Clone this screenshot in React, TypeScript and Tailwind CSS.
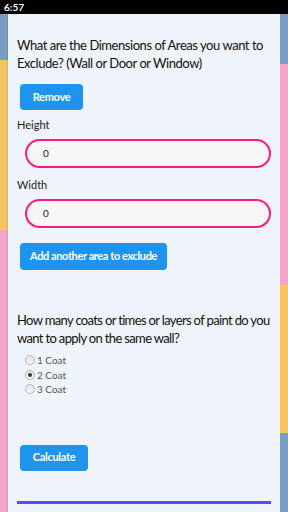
import React from "react";

const font = { fontFamily: "Lato, 'Open Sans', sans-serif" };

function Radio({ checked, label }: { checked?: boolean; label: string }) {
  return (
    <div className="flex items-center h-[14.5px] ml-[8px]">
      <span className="w-[10px] h-[10px] rounded-full border border-[#b5b5b5] bg-gradient-to-b from-[#e2e2e2] to-[#f8f8f8] flex items-center justify-center">
        {checked && <span className="w-[4px] h-[4px] rounded-full bg-[#333]" />}
      </span>
      <span className="ml-[2px] text-[10px] text-[#555] leading-none">{label}</span>
    </div>
  );
}

export default function App() {
  return (
    <div className="w-[288px] h-[512px] flex flex-col overflow-hidden" style={font}>
      <div className="h-[14px] bg-black flex items-center px-[4px]">
        <span className="text-white text-[10px] font-bold leading-none">6:57</span>
      </div>
      <div className="flex flex-1">
        <div className="w-[8px] flex flex-col">
          <div className="h-[46px] bg-[#769dc3]" />
          <div className="h-[170px] bg-[#f4c462]" />
          <div className="flex-1 bg-[#f2a5c6]" />
        </div>
        <div className="flex-1 min-w-0 bg-[#eff3fa] shadow-[0_0_2px_rgba(0,0,0,0.25)] px-[9px] pt-[22px] flex flex-col">
          <p className="text-[13px] leading-[18px] text-[#111] tracking-[-0.45px] whitespace-nowrap">
            What are the Dimensions of Areas you want to
            <br />
            Exclude? (Wall or Door or Window)
          </p>
          <button className="mt-[12px] ml-[3px] w-[63px] h-[26px] rounded-[4px] bg-[#1e94ee] text-white text-[11px] font-bold tracking-[-0.3px]">
            Remove
          </button>
          <label className="mt-[7px] text-[11px] leading-[16px] text-[#222]">Height</label>
          <div className="mt-[6px] ml-[8px] h-[29px] rounded-full border-2 border-[#ff1a7c] bg-[#f6f6f6] flex items-center pl-[16px] text-[10px] text-[#222]">
            0
          </div>
          <label className="mt-[9px] text-[11px] leading-[16px] text-[#222]">Width</label>
          <div className="mt-[6px] ml-[8px] h-[29px] rounded-full border-2 border-[#ff1a7c] bg-[#f6f6f6] flex items-center pl-[16px] text-[10px] text-[#222]">
            0
          </div>
          <button className="mt-[15px] ml-[3px] w-[147px] h-[27px] rounded-[4px] bg-[#1e94ee] text-white text-[11px] font-bold tracking-[-0.4px]">
            Add another area to exclude
          </button>
          <p className="mt-[41px] text-[13px] leading-[18px] text-[#111] tracking-[-0.65px] whitespace-nowrap">
            How many coats or times or layers of paint do you
            <br />
            want to apply on the same wall?
          </p>
          <div className="mt-[6px] flex flex-col">
            <Radio label="1 Coat" />
            <Radio label="2 Coat" checked />
            <Radio label="3 Coat" />
          </div>
          <button className="mt-[48px] ml-[3px] w-[68px] h-[26px] rounded-[4px] bg-[#1e94ee] text-white text-[11px] font-bold tracking-[-0.3px]">
            Calculate
          </button>
          <div className="mt-[30px] h-[3px] bg-[#5a4cf5]" />
        </div>
        <div className="w-[8px] flex flex-col">
          <div className="h-[50px] bg-[#769dc3]" />
          <div className="h-[221px] bg-[#f2a5c6]" />
          <div className="h-[148px] bg-[#f4c462]" />
          <div className="flex-1 bg-[#769dc3]" />
        </div>
      </div>
    </div>
  );
}
